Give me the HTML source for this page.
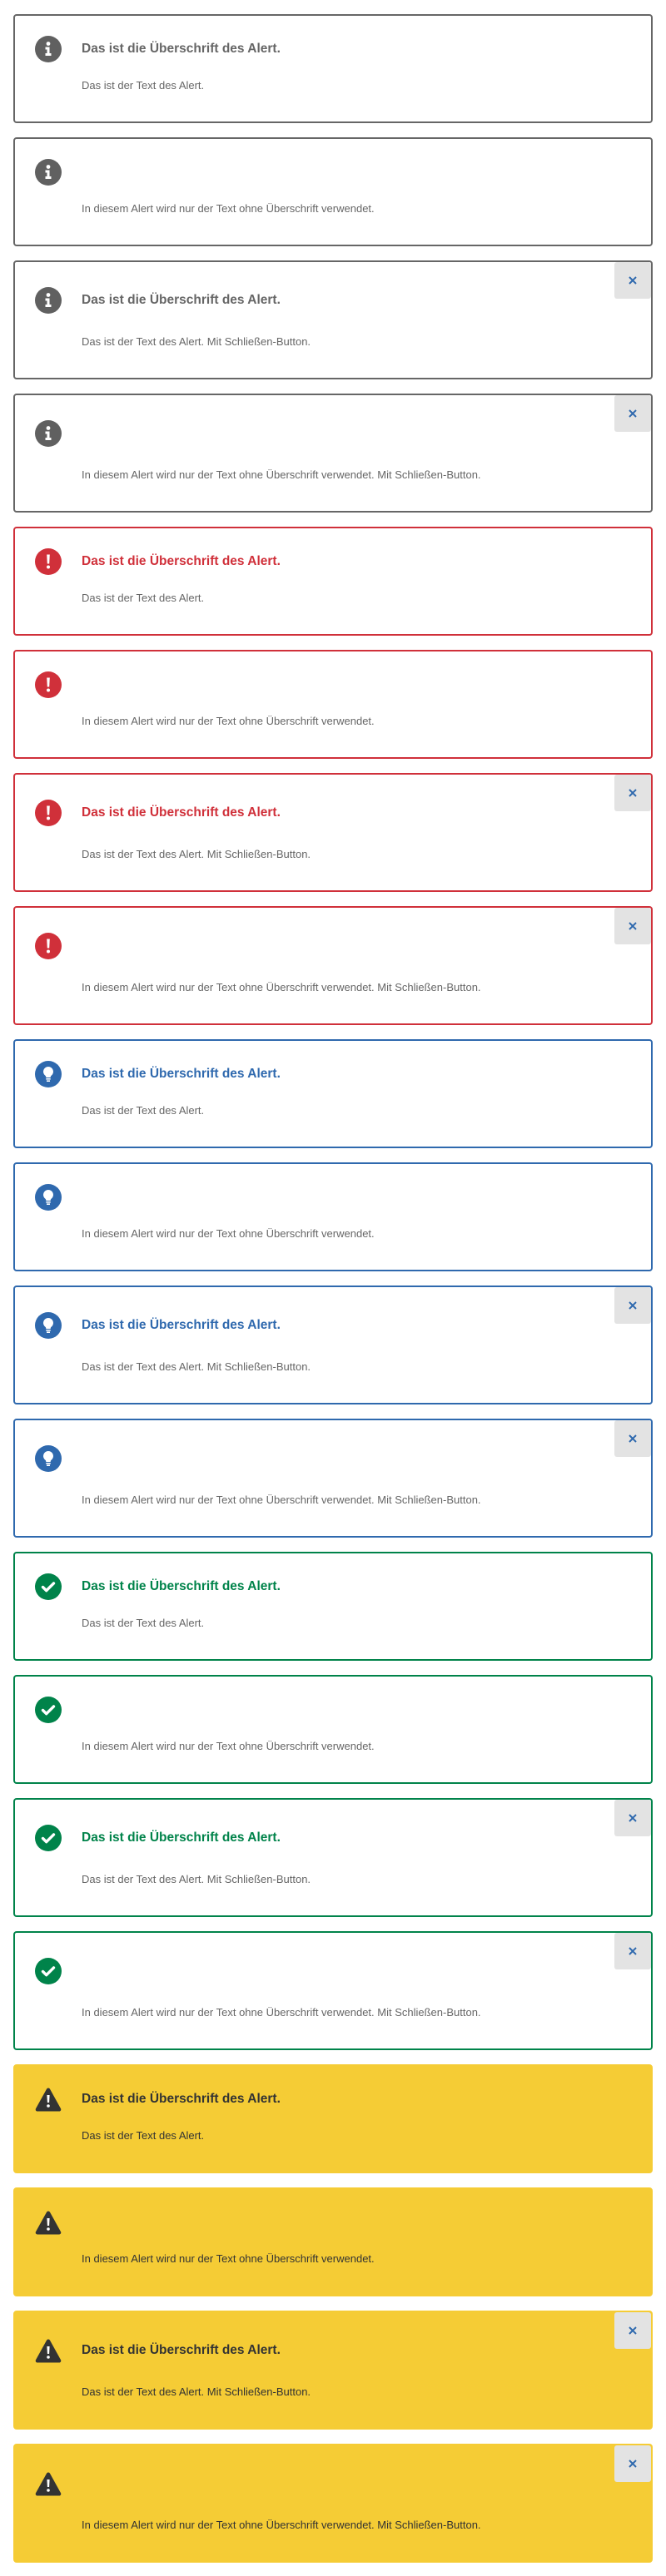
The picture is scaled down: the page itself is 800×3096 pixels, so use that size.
<!DOCTYPE html>
<html><head><meta charset="utf-8">
<style>
*{box-sizing:border-box;margin:0;padding:0}
body{width:800px;height:3096px;background:#fff;font-family:"Liberation Sans",Arial,sans-serif;position:relative;overflow:hidden}
.a{position:absolute;left:16px;width:768px;height:131px;border:2px solid #666;border-radius:4px;background:#fff}
.a.c{height:143px}
.ic{position:absolute;left:24px;top:24px;width:32px;height:32px}
.a.c .ic{top:30px}
.h{position:absolute;left:80px;top:30px;font-size:15.5px;font-weight:bold;line-height:20px;color:#666;white-space:nowrap}
.a.c .h{top:36px}
.t{position:absolute;left:80px;top:74px;font-size:13px;line-height:20px;color:#666;white-space:nowrap}
.a.c .t{top:86px}
.x{position:absolute;right:0;top:0;width:44px;height:44px;background:#e3e3e3;border-radius:3px}
.x svg{position:absolute;left:17px;top:17px}
.r{border-color:#d0303a}.r .h{color:#d0303a}
.b{border-color:#2f69ae}.b .h{color:#2f69ae}
.g{border-color:#00834a}.g .h{color:#00834a}
.y{border-color:#f5cc35;background:#f5cc35}.y .h,.y .t{color:#333}
</style></head><body>
<svg width="0" height="0" style="position:absolute">
<defs>
<symbol id="info" viewBox="0 0 32 32"><circle cx="16" cy="16" r="16" fill="#606060"/><circle cx="16" cy="9.5" r="2.4" fill="#fff"/><path d="M12.5 13.5h5v7.5h2v3h-7v-3h2v-4.5h-2z" fill="#fff"/></symbol>
<symbol id="err" viewBox="0 0 32 32"><circle cx="16" cy="16" r="16" fill="#d0303a"/><path d="M14.2 7.5h3.6l-.6 11h-2.4z" fill="#fff"/><circle cx="16" cy="22.5" r="2" fill="#fff"/></symbol>
<symbol id="bulb" viewBox="0 0 32 32"><circle cx="16" cy="16" r="16" fill="#2f69ae"/><path d="M16 7a6 6 0 0 0-3.6 10.8c.6.5.9 1.3.9 2.2h5.4c0-.9.3-1.7.9-2.2A6 6 0 0 0 16 7z" fill="#fff"/><rect x="13.3" y="21" width="5.4" height="1.6" fill="#fff"/><rect x="14" y="23.4" width="4" height="1.6" fill="#fff"/></symbol>
<symbol id="ok" viewBox="0 0 32 32"><circle cx="16" cy="16" r="16" fill="#00834a"/><path d="M9.5 16.5l4.2 4.2 8.8-8.8" stroke="#fff" stroke-width="3.4" fill="none" stroke-linecap="round" stroke-linejoin="round"/></symbol>
<symbol id="warn" viewBox="0 0 32 32"><path d="M16 2.5c.9 0 1.6.5 2 1.2l13 23.5c.8 1.5-.2 3.3-1.9 3.3H2.9c-1.7 0-2.7-1.8-1.9-3.3L14 3.7c.4-.7 1.1-1.2 2-1.2z" fill="#333"/><path d="M14.4 11h3.2l-.5 9h-2.2z" fill="#fff"/><circle cx="16" cy="24" r="1.8" fill="#fff"/></symbol>
<symbol id="cl" viewBox="0 0 10 10"><path d="M1 1l8 8M9 1l-8 8" stroke="#2f69ae" stroke-width="2"/></symbol>
</defs></svg>

<div class="a" style="top:17px"><svg class="ic"><use href="#info"/></svg><div class="h">Das ist die Überschrift des Alert.</div><div class="t">Das ist der Text des Alert.</div></div>
<div class="a" style="top:165px"><svg class="ic"><use href="#info"/></svg><div class="t">In diesem Alert wird nur der Text ohne Überschrift verwendet.</div></div>
<div class="a c" style="top:313px"><svg class="ic"><use href="#info"/></svg><div class="h">Das ist die Überschrift des Alert.</div><div class="t">Das ist der Text des Alert. Mit Schließen-Button.</div><div class="x"><svg width="10" height="10"><use href="#cl"/></svg></div></div>
<div class="a c" style="top:473px"><svg class="ic"><use href="#info"/></svg><div class="t">In diesem Alert wird nur der Text ohne Überschrift verwendet. Mit Schließen-Button.</div><div class="x"><svg width="10" height="10"><use href="#cl"/></svg></div></div>

<div class="a r" style="top:633px"><svg class="ic"><use href="#err"/></svg><div class="h">Das ist die Überschrift des Alert.</div><div class="t">Das ist der Text des Alert.</div></div>
<div class="a r" style="top:781px"><svg class="ic"><use href="#err"/></svg><div class="t">In diesem Alert wird nur der Text ohne Überschrift verwendet.</div></div>
<div class="a r c" style="top:929px"><svg class="ic"><use href="#err"/></svg><div class="h">Das ist die Überschrift des Alert.</div><div class="t">Das ist der Text des Alert. Mit Schließen-Button.</div><div class="x"><svg width="10" height="10"><use href="#cl"/></svg></div></div>
<div class="a r c" style="top:1089px"><svg class="ic"><use href="#err"/></svg><div class="t">In diesem Alert wird nur der Text ohne Überschrift verwendet. Mit Schließen-Button.</div><div class="x"><svg width="10" height="10"><use href="#cl"/></svg></div></div>

<div class="a b" style="top:1249px"><svg class="ic"><use href="#bulb"/></svg><div class="h">Das ist die Überschrift des Alert.</div><div class="t">Das ist der Text des Alert.</div></div>
<div class="a b" style="top:1397px"><svg class="ic"><use href="#bulb"/></svg><div class="t">In diesem Alert wird nur der Text ohne Überschrift verwendet.</div></div>
<div class="a b c" style="top:1545px"><svg class="ic"><use href="#bulb"/></svg><div class="h">Das ist die Überschrift des Alert.</div><div class="t">Das ist der Text des Alert. Mit Schließen-Button.</div><div class="x"><svg width="10" height="10"><use href="#cl"/></svg></div></div>
<div class="a b c" style="top:1705px"><svg class="ic"><use href="#bulb"/></svg><div class="t">In diesem Alert wird nur der Text ohne Überschrift verwendet. Mit Schließen-Button.</div><div class="x"><svg width="10" height="10"><use href="#cl"/></svg></div></div>

<div class="a g" style="top:1865px"><svg class="ic"><use href="#ok"/></svg><div class="h">Das ist die Überschrift des Alert.</div><div class="t">Das ist der Text des Alert.</div></div>
<div class="a g" style="top:2013px"><svg class="ic"><use href="#ok"/></svg><div class="t">In diesem Alert wird nur der Text ohne Überschrift verwendet.</div></div>
<div class="a g c" style="top:2161px"><svg class="ic"><use href="#ok"/></svg><div class="h">Das ist die Überschrift des Alert.</div><div class="t">Das ist der Text des Alert. Mit Schließen-Button.</div><div class="x"><svg width="10" height="10"><use href="#cl"/></svg></div></div>
<div class="a g c" style="top:2321px"><svg class="ic"><use href="#ok"/></svg><div class="t">In diesem Alert wird nur der Text ohne Überschrift verwendet. Mit Schließen-Button.</div><div class="x"><svg width="10" height="10"><use href="#cl"/></svg></div></div>

<div class="a y" style="top:2481px"><svg class="ic"><use href="#warn"/></svg><div class="h">Das ist die Überschrift des Alert.</div><div class="t">Das ist der Text des Alert.</div></div>
<div class="a y" style="top:2629px"><svg class="ic"><use href="#warn"/></svg><div class="t">In diesem Alert wird nur der Text ohne Überschrift verwendet.</div></div>
<div class="a y c" style="top:2777px"><svg class="ic"><use href="#warn"/></svg><div class="h">Das ist die Überschrift des Alert.</div><div class="t">Das ist der Text des Alert. Mit Schließen-Button.</div><div class="x"><svg width="10" height="10"><use href="#cl"/></svg></div></div>
<div class="a y c" style="top:2937px"><svg class="ic"><use href="#warn"/></svg><div class="t">In diesem Alert wird nur der Text ohne Überschrift verwendet. Mit Schließen-Button.</div><div class="x"><svg width="10" height="10"><use href="#cl"/></svg></div></div>
</body></html>
